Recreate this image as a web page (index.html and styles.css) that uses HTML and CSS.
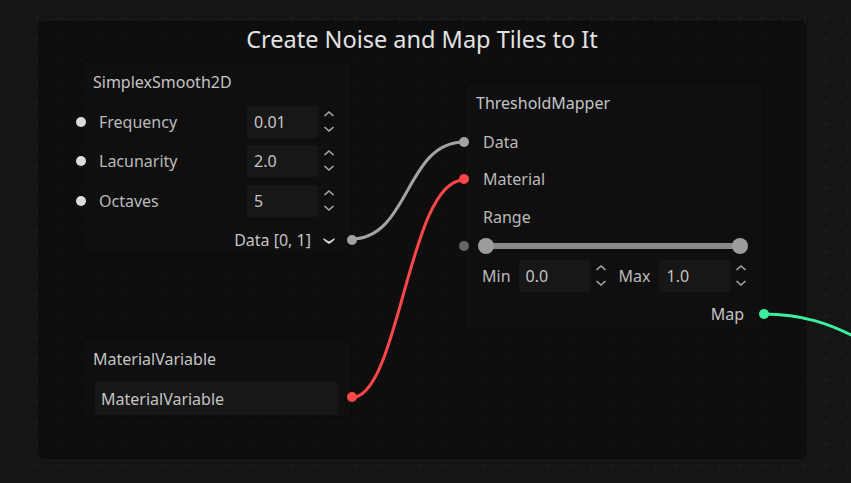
FILE: index.html
```html
<!DOCTYPE html>
<html>
<head>
<meta charset="utf-8">
<link rel="stylesheet" href="styles.css">
</head>
<body>
<div class="canvas">
  <div class="group">
    <div class="group-title">Create Noise and Map Tiles to It</div>
  </div>

  <svg class="wires" width="851" height="483" viewBox="0 0 851 483">
    <path d="M351 239 C 410 239, 405 142, 464 142" stroke="#a3a3a3" stroke-width="3" fill="none"/>
    <path d="M351 398 C 400 398, 408 180, 464 180" stroke="#ff4747" stroke-width="3" fill="none"/>
    <path d="M763 314 C 800 314, 830 322, 870 345" stroke="#3df0a0" stroke-width="3" fill="none"/>
  </svg>

  <div class="node node-simplex">
    <div class="node-title">SimplexSmooth2D</div>
    <div class="row">
      <span class="port port-in port-white"></span>
      <span class="label">Frequency</span>
      <span class="box">0.01</span>
      <span class="spin"><svg width="12" height="24" viewBox="0 0 12 24"><path d="M1.5 6 L6 2 L10.5 6" /><path d="M1.5 17 L6 21 L10.5 17" /></svg></span>
    </div>
    <div class="row">
      <span class="port port-in port-white"></span>
      <span class="label">Lacunarity</span>
      <span class="box">2.0</span>
      <span class="spin"><svg width="12" height="24" viewBox="0 0 12 24"><path d="M1.5 6 L6 2 L10.5 6" /><path d="M1.5 17 L6 21 L10.5 17" /></svg></span>
    </div>
    <div class="row">
      <span class="port port-in port-white"></span>
      <span class="label">Octaves</span>
      <span class="box">5</span>
      <span class="spin"><svg width="12" height="24" viewBox="0 0 12 24"><path d="M1.5 6 L6 2 L10.5 6" /><path d="M1.5 17 L6 21 L10.5 17" /></svg></span>
    </div>
    <div class="out-row">
      <span class="out-label">Data [0, 1]</span>
      <span class="spin"><svg class="cup" width="14" height="9" viewBox="0 0 14 9"><path d="M1 2 Q 1 4 4 6 L7 8 L10 6 Q 13 4 13 2 L11 3 Q 9 4.8 7 5.3 Q 5 4.8 3 3 Z"/></svg></span>
      <span class="port port-out port-gray"></span>
    </div>
  </div>

  <div class="node node-threshold">
    <div class="node-title">ThresholdMapper</div>
    <div class="trow">
      <span class="port port-in port-gray"></span>
      <span class="label">Data</span>
    </div>
    <div class="trow">
      <span class="port port-in port-red"></span>
      <span class="label">Material</span>
    </div>
    <div class="trow">
      <span class="label">Range</span>
    </div>
    <div class="slider-row">
      <span class="port port-in port-dim"></span>
      <div class="slider">
        <div class="track"></div>
        <span class="knob knob-l"></span>
        <span class="knob knob-r"></span>
      </div>
    </div>
    <div class="minmax">
      <span class="mm-label">Min</span>
      <span class="box box-mm">0.0</span>
      <span class="spin"><svg width="12" height="24" viewBox="0 0 12 24"><path d="M1.5 6 L6 2 L10.5 6" /><path d="M1.5 17 L6 21 L10.5 17" /></svg></span>
      <span class="mm-label mm-max">Max</span>
      <span class="box box-mm">1.0</span>
      <span class="spin"><svg width="12" height="24" viewBox="0 0 12 24"><path d="M1.5 6 L6 2 L10.5 6" /><path d="M1.5 17 L6 21 L10.5 17" /></svg></span>
    </div>
    <div class="map-row">
      <span class="out-label">Map</span>
      <span class="port port-out port-green"></span>
    </div>
  </div>

  <div class="node node-material">
    <div class="node-title">MaterialVariable</div>
    <div class="mat-row">
      <span class="box box-wide">MaterialVariable</span>
      <span class="port port-out port-red"></span>
    </div>
  </div>
</div>
</body>
</html>
```

FILE: styles.css
```css
* { box-sizing: border-box; }
html, body { margin: 0; padding: 0; }
body {
  width: 851px;
  height: 483px;
  overflow: hidden;
  background: #151515;
  font-family: "Noto Sans", "Open Sans", sans-serif;
  font-size: 16px;
  color: #bababa;
}
.canvas {
  position: relative;
  width: 851px;
  height: 483px;
  background-color: #151515;
  background-image: radial-gradient(circle, #242424 1px, rgba(0,0,0,0) 1.5px);
  background-size: 21.333px 21.333px;
  background-position: 5.33px 7.33px;
}
.group {
  position: absolute;
  left: 38px;
  top: 21px;
  width: 768px;
  height: 438px;
  background: rgba(0, 0, 0, 0.33);
  border: 1px solid #0b0b0b;
  border-radius: 6px;
}
.group-title {
  padding-top: 2px;
  text-align: center;
  font-size: 23.5px;
  line-height: 30px;
  color: #e2e2e2;
}
.wires {
  position: absolute;
  left: 0;
  top: 0;
}
.node {
  position: absolute;
  background: #0f0f0f;
  border: 1px solid #0a0a0a;
  border-radius: 5px;
}
.node-title {
  height: 41px;
  display: flex;
  align-items: center;
  padding-left: 11px;
  color: #c4c4c4;
}
.node-simplex { left: 81px; top: 60px; width: 271px; height: 195px; }
.node-threshold { left: 464px; top: 81px; width: 300px; height: 250px; }
.node-material { left: 81px; top: 337px; width: 271px; height: 80px; }

.port {
  position: absolute;
  width: 10px;
  height: 10px;
  border-radius: 50%;
  top: 50%;
  margin-top: -5px;
}
.port-in { left: -6px; }
.port-out { right: -6px; }
.port-white { background: #dcdcdc; }
.port-gray { background: #a3a3a3; }
.port-red { background: #ff4747; }
.port-green { background: #3df0a0; }
.port-dim { background: #666; }

.row {
  position: relative;
  height: 39.5px;
  display: flex;
  align-items: center;
  padding-left: 17px;
  padding-right: 11px;
}
.label { flex: 1; }
.box {
  display: flex;
  align-items: center;
  height: 32px;
  width: 71px;
  padding-left: 7px;
  background: #171717;
  border-radius: 2px;
  color: #c4c4c4;
}
.spin {
  width: 22px;
  display: flex;
  justify-content: center;
  align-items: center;
}
.spin svg path {
  fill: none;
  stroke: #a8a8a8;
  stroke-width: 1.6;
}
.spin svg.cup path {
  fill: #d8d8d8;
  stroke: none;
}
.out-row {
  position: relative;
  margin-top: 4.5px;
  height: 30px;
  display: flex;
  align-items: center;
  justify-content: flex-end;
  padding-right: 11px;
}
.out-row .out-label { margin-right: 7px; }
.out-label { color: #c4c4c4; }

.trow {
  position: relative;
  height: 37.5px;
  display: flex;
  align-items: center;
  padding-left: 18px;
}
.slider-row {
  position: relative;
  height: 21px;
  padding: 0 15px 0 13px;
  display: flex;
  align-items: center;
}
.slider {
  position: relative;
  flex: 1;
  height: 16px;
}
.track {
  position: absolute;
  left: 8px;
  right: 8px;
  top: 5px;
  height: 6px;
  background: #8a8a8a;
}
.knob {
  position: absolute;
  top: 0;
  width: 16px;
  height: 16px;
  border-radius: 50%;
  background: #9c9c9c;
}
.knob-l { left: 0; }
.knob-r { right: 0; }
.minmax {
  margin-top: 2px;
  height: 35px;
  display: flex;
  align-items: center;
  padding-left: 17px;
}
.mm-label { margin-right: 8px; }
.mm-max { margin-left: 7px; margin-right: 9px; }
.box-mm { width: 71px; }
.map-row {
  position: relative;
  margin-top: 3px;
  height: 34px;
  display: flex;
  align-items: center;
  justify-content: flex-end;
  padding-right: 19px;
}
.mat-row {
  position: relative;
  height: 36px;
  padding: 3px 13px 0 13px;
}
.box-wide {
  width: 100%;
  height: 33px;
  padding-left: 6px;
}
```
